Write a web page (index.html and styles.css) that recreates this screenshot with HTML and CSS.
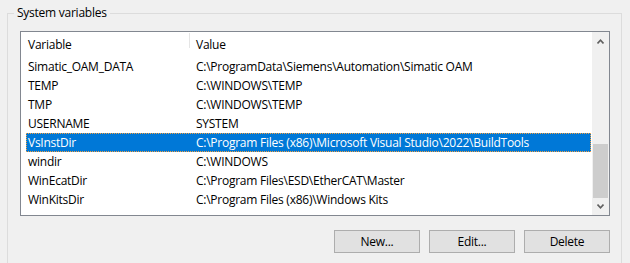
FILE: index.html
```html
<!DOCTYPE html>
<html lang="en">
  <head>
    <meta charset="UTF-8" />
    <title>System variables</title>
    <link rel="stylesheet" href="styles.css">
  </head>
  <body>
    <fieldset class="group">
      <legend class="group-title">System variables</legend>
      <div class="listbox">
        <div class="list">
          <div class="list-head">
            <div class="col-var">Variable</div>
            <div class="head-sep"></div>
            <div class="col-val">Value</div>
          </div>
          <div class="list-row"><span class="col-var">Simatic_OAM_DATA</span><span class="col-val">C:\ProgramData\Siemens\Automation\Simatic OAM</span></div>
          <div class="list-row"><span class="col-var">TEMP</span><span class="col-val">C:\WINDOWS\TEMP</span></div>
          <div class="list-row"><span class="col-var">TMP</span><span class="col-val">C:\WINDOWS\TEMP</span></div>
          <div class="list-row"><span class="col-var">USERNAME</span><span class="col-val">SYSTEM</span></div>
          <div class="list-row selected"><span class="col-var">VsInstDir</span><span class="col-val">C:\Program Files (x86)\Microsoft Visual Studio\2022\BuildTools</span></div>
          <div class="list-row"><span class="col-var">windir</span><span class="col-val">C:\WINDOWS</span></div>
          <div class="list-row"><span class="col-var">WinEcatDir</span><span class="col-val">C:\Program Files\ESD\EtherCAT\Master</span></div>
          <div class="list-row"><span class="col-var">WinKitsDir</span><span class="col-val">C:\Program Files (x86)\Windows Kits</span></div>
        </div>
        <div class="scrollbar">
          <div class="sb-btn sb-up">
            <svg width="7" height="5" viewBox="0 0 7 5"><polyline points="0.5,4.5 3.5,1.2 6.5,4.5" fill="none" stroke="#606060" stroke-width="1.6"/></svg>
          </div>
          <div class="sb-track"><div class="sb-thumb"></div></div>
          <div class="sb-btn sb-down">
            <svg width="7" height="5" viewBox="0 0 7 5"><polyline points="0.5,0.5 3.5,3.8 6.5,0.5" fill="none" stroke="#606060" stroke-width="1.6"/></svg>
          </div>
        </div>
      </div>
      <div class="actions">
        <button class="btn">New...</button>
        <button class="btn">Edit...</button>
        <button class="btn">Delete</button>
      </div>
    </fieldset>
  </body>
</html>
```

FILE: styles.css
```css
body {
  margin: 0;
  background-color: #f0f0f0;
  font-family: 'Open Sans', 'Noto Sans', sans-serif;
  font-size: 12px;
  letter-spacing: -0.25px;
  color: #000;
  overflow: hidden;
}

.group {
  margin: 5px 8px 0 7px;
  padding: 10px 11px 10px 6px;
  border: 1px solid #dcdcdc;
  border-bottom: none;
}

.group-title {
  padding: 0 3px;
  line-height: 16px;
}

.listbox {
  display: flex;
  height: 185px;
  box-sizing: border-box;
  margin-left: 6px;
  border: 1px solid #828790;
  background-color: #ffffff;
}

.list {
  flex: 1;
}

.list-head {
  display: flex;
  height: 25px;
}

.list-head .col-var {
  width: 161px;
  padding-left: 7px;
  line-height: 25px;
}

.head-sep {
  width: 1px;
  height: 15px;
  margin-top: 1px;
  background-color: #e5e5e5;
}

.list-head .col-val {
  padding-left: 6px;
  line-height: 25px;
}

.list-row {
  display: flex;
  height: 19px;
  line-height: 19px;
  margin: 0 1px 0 5px;
  white-space: nowrap;
}

.list-row .col-var {
  width: 162px;
  padding-left: 2px;
}

.list-row .col-val {
  padding-left: 6px;
}

.list-row.selected {
  background-color: #0078d7;
  color: #ffffff;
  outline: 1px dotted #f4a040;
  outline-offset: -1px;
}

.scrollbar {
  width: 17px;
  display: flex;
  flex-direction: column;
  background-color: #f0f0f0;
}

.sb-btn {
  height: 17px;
  display: flex;
  align-items: center;
  justify-content: center;
}

.sb-up {
  padding-top: 2px;
  height: 15px;
}

.sb-track {
  flex: 1;
  display: flex;
  flex-direction: column;
  justify-content: flex-end;
}

.sb-thumb {
  height: 54px;
  margin: 0 1px;
  background-color: #cdcdcd;
}

.actions {
  display: flex;
  justify-content: flex-end;
  gap: 9px;
  margin-top: 14px;
}

.btn {
  width: 86px;
  height: 23px;
  padding: 0;
  font-family: inherit;
  font-size: 12px;
  letter-spacing: inherit;
  color: #000;
  background-color: #e1e1e1;
  border: 1px solid #adadad;
}
```
